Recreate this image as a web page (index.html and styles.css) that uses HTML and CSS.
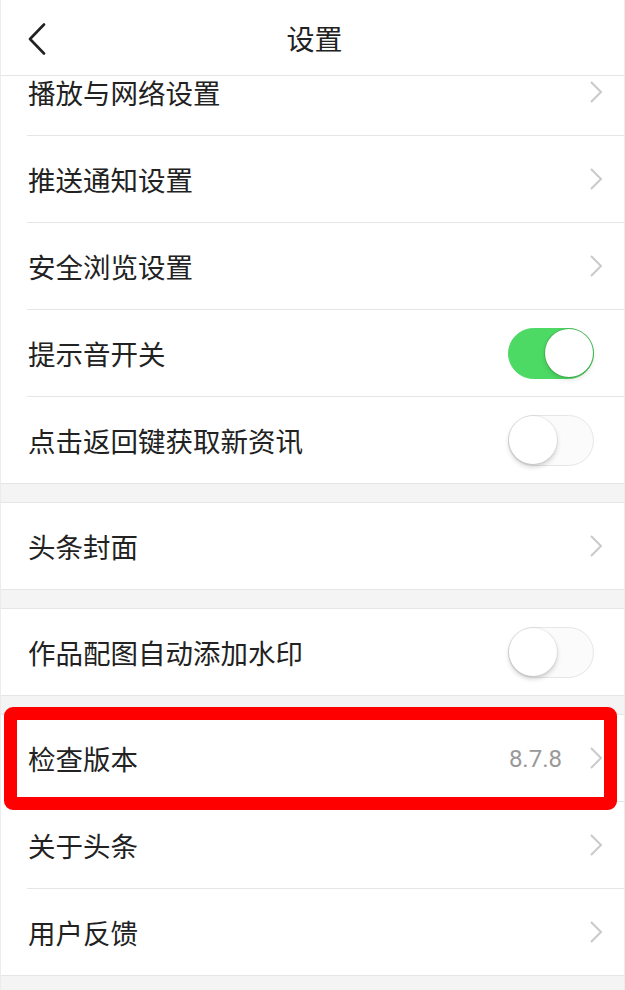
FILE: index.html
```html
<!DOCTYPE html>
<html lang="zh-CN">
<head>
<meta charset="utf-8">
<title>设置</title>
<link rel="stylesheet" href="styles.css">
</head>
<body>
<div class="phone">
  <header class="nav">
    <span class="back">
      <svg width="20" height="32" viewBox="0 0 20 32"><path d="M17 1.5 L3 16 L17 30.5" fill="none" stroke="#222" stroke-width="2.6" stroke-linecap="round" stroke-linejoin="round"/></svg>
    </span>
    <h1 class="title">设置</h1>
    <span></span>
  </header>
  <div class="scroll">
    <div class="scroll-inner">
      <section class="group group-first">
        <div class="row"><div class="row-inner"><span class="label">播放与网络设置</span><svg class="chev" width="14" height="24" viewBox="0 0 14 24"><path d="M2 2 L12 12 L2 22" fill="none" stroke="#cacaca" stroke-width="2"/></svg></div></div>
        <div class="row"><div class="row-inner"><span class="label">推送通知设置</span><svg class="chev" width="14" height="24" viewBox="0 0 14 24"><path d="M2 2 L12 12 L2 22" fill="none" stroke="#cacaca" stroke-width="2"/></svg></div></div>
        <div class="row"><div class="row-inner"><span class="label">安全浏览设置</span><svg class="chev" width="14" height="24" viewBox="0 0 14 24"><path d="M2 2 L12 12 L2 22" fill="none" stroke="#cacaca" stroke-width="2"/></svg></div></div>
        <div class="row"><div class="row-inner"><span class="label">提示音开关</span><span class="switch on"><span class="knob"></span></span></div></div>
        <div class="row"><div class="row-inner"><span class="label">点击返回键获取新资讯</span><span class="switch"><span class="knob"></span></span></div></div>
      </section>
      <section class="group">
        <div class="row"><div class="row-inner"><span class="label">头条封面</span><svg class="chev" width="14" height="24" viewBox="0 0 14 24"><path d="M2 2 L12 12 L2 22" fill="none" stroke="#cacaca" stroke-width="2"/></svg></div></div>
      </section>
      <section class="group">
        <div class="row"><div class="row-inner"><span class="label">作品配图自动添加水印</span><span class="switch"><span class="knob"></span></span></div></div>
      </section>
      <section class="group">
        <div class="row row-marked"><div class="row-inner"><span class="label">检查版本</span><span class="value">8.7.8</span><svg class="chev" width="14" height="24" viewBox="0 0 14 24"><path d="M2 2 L12 12 L2 22" fill="none" stroke="#cacaca" stroke-width="2"/></svg></div><span class="highlight"></span></div>
        <div class="row"><div class="row-inner"><span class="label">关于头条</span><svg class="chev" width="14" height="24" viewBox="0 0 14 24"><path d="M2 2 L12 12 L2 22" fill="none" stroke="#cacaca" stroke-width="2"/></svg></div></div>
        <div class="row"><div class="row-inner"><span class="label">用户反馈</span><svg class="chev" width="14" height="24" viewBox="0 0 14 24"><path d="M2 2 L12 12 L2 22" fill="none" stroke="#cacaca" stroke-width="2"/></svg></div></div>
      </section>
    </div>
  </div>
</div>
</body>
</html>
```

FILE: styles.css
```css
* { box-sizing: border-box; }
html, body { margin: 0; padding: 0; background: #f4f4f4; }
body {
  font-family: "Noto Sans CJK SC", "Noto Sans", sans-serif;
  color: #222;
}
.phone {
  width: 625px;
  height: 990px;
  overflow: hidden;
  background: #f4f4f4;
  border-left: 1px solid #ececec;
  border-right: 1px solid #ececec;
}
.nav {
  height: 76px;
  background: #fff;
  border-bottom: 1px solid #e6e6e6;
  display: grid;
  grid-template-columns: 1fr auto 1fr;
  align-items: center;
}
.back {
  display: flex;
  align-items: center;
  padding-left: 26px;
  padding-top: 2px;
}
.title {
  margin: 0;
  font-size: 28px;
  font-weight: 400;
  line-height: 1;
  padding-left: 4px;
}
.scroll {
  height: 914px;
  overflow: hidden;
}
.scroll-inner {
  margin-top: -27px;
}
.group {
  background: #fff;
  border-top: 1px solid #e6e6e6;
  border-bottom: 1px solid #e6e6e6;
  margin-top: 18px;
}
.group-first {
  margin-top: 0;
  border-top: none;
}
.row {
  position: relative;
  padding-left: 26px;
}
.row-inner {
  height: 87px;
  display: flex;
  align-items: center;
  padding-left: 1px;
  padding-right: 21px;
  border-bottom: 1px solid #e6e6e6;
}
.row:last-child .row-inner {
  height: 86px;
  border-bottom: none;
}
.label {
  flex: 1;
  font-size: 27.5px;
  line-height: 1;
  padding-top: 2px;
}
.chev { display: block; }
.value {
  font-family: Roboto, "Liberation Sans", sans-serif;
  font-size: 24px;
  color: #999;
  margin-right: 27px;
  padding-top: 2px;
}
.switch {
  position: relative;
  width: 86px;
  height: 51px;
  border-radius: 26px;
  background: #fbfbfb;
  border: 1.5px solid #e6e6e6;
  margin-right: 9px;
}
.switch .knob {
  position: absolute;
  top: 0;
  left: 0;
  width: 48px;
  height: 48px;
  border-radius: 50%;
  background: #fff;
  box-shadow: 0 3px 5px rgba(0,0,0,0.18), 0 0 0 1px rgba(0,0,0,0.05);
}
.switch.on {
  background: #4cd964;
  border-color: #4cd964;
}
.switch.on .knob {
  left: auto;
  right: 0;
  box-shadow: 0 3px 5px rgba(0,0,0,0.12), 0 0 0 1px rgba(60,160,70,0.5);
}
.highlight {
  position: absolute;
  top: -8px;
  bottom: -8px;
  left: 3px;
  right: 7px;
  border: 13px solid #ff0000;
  border-radius: 9px;
  pointer-events: none;
}
```
